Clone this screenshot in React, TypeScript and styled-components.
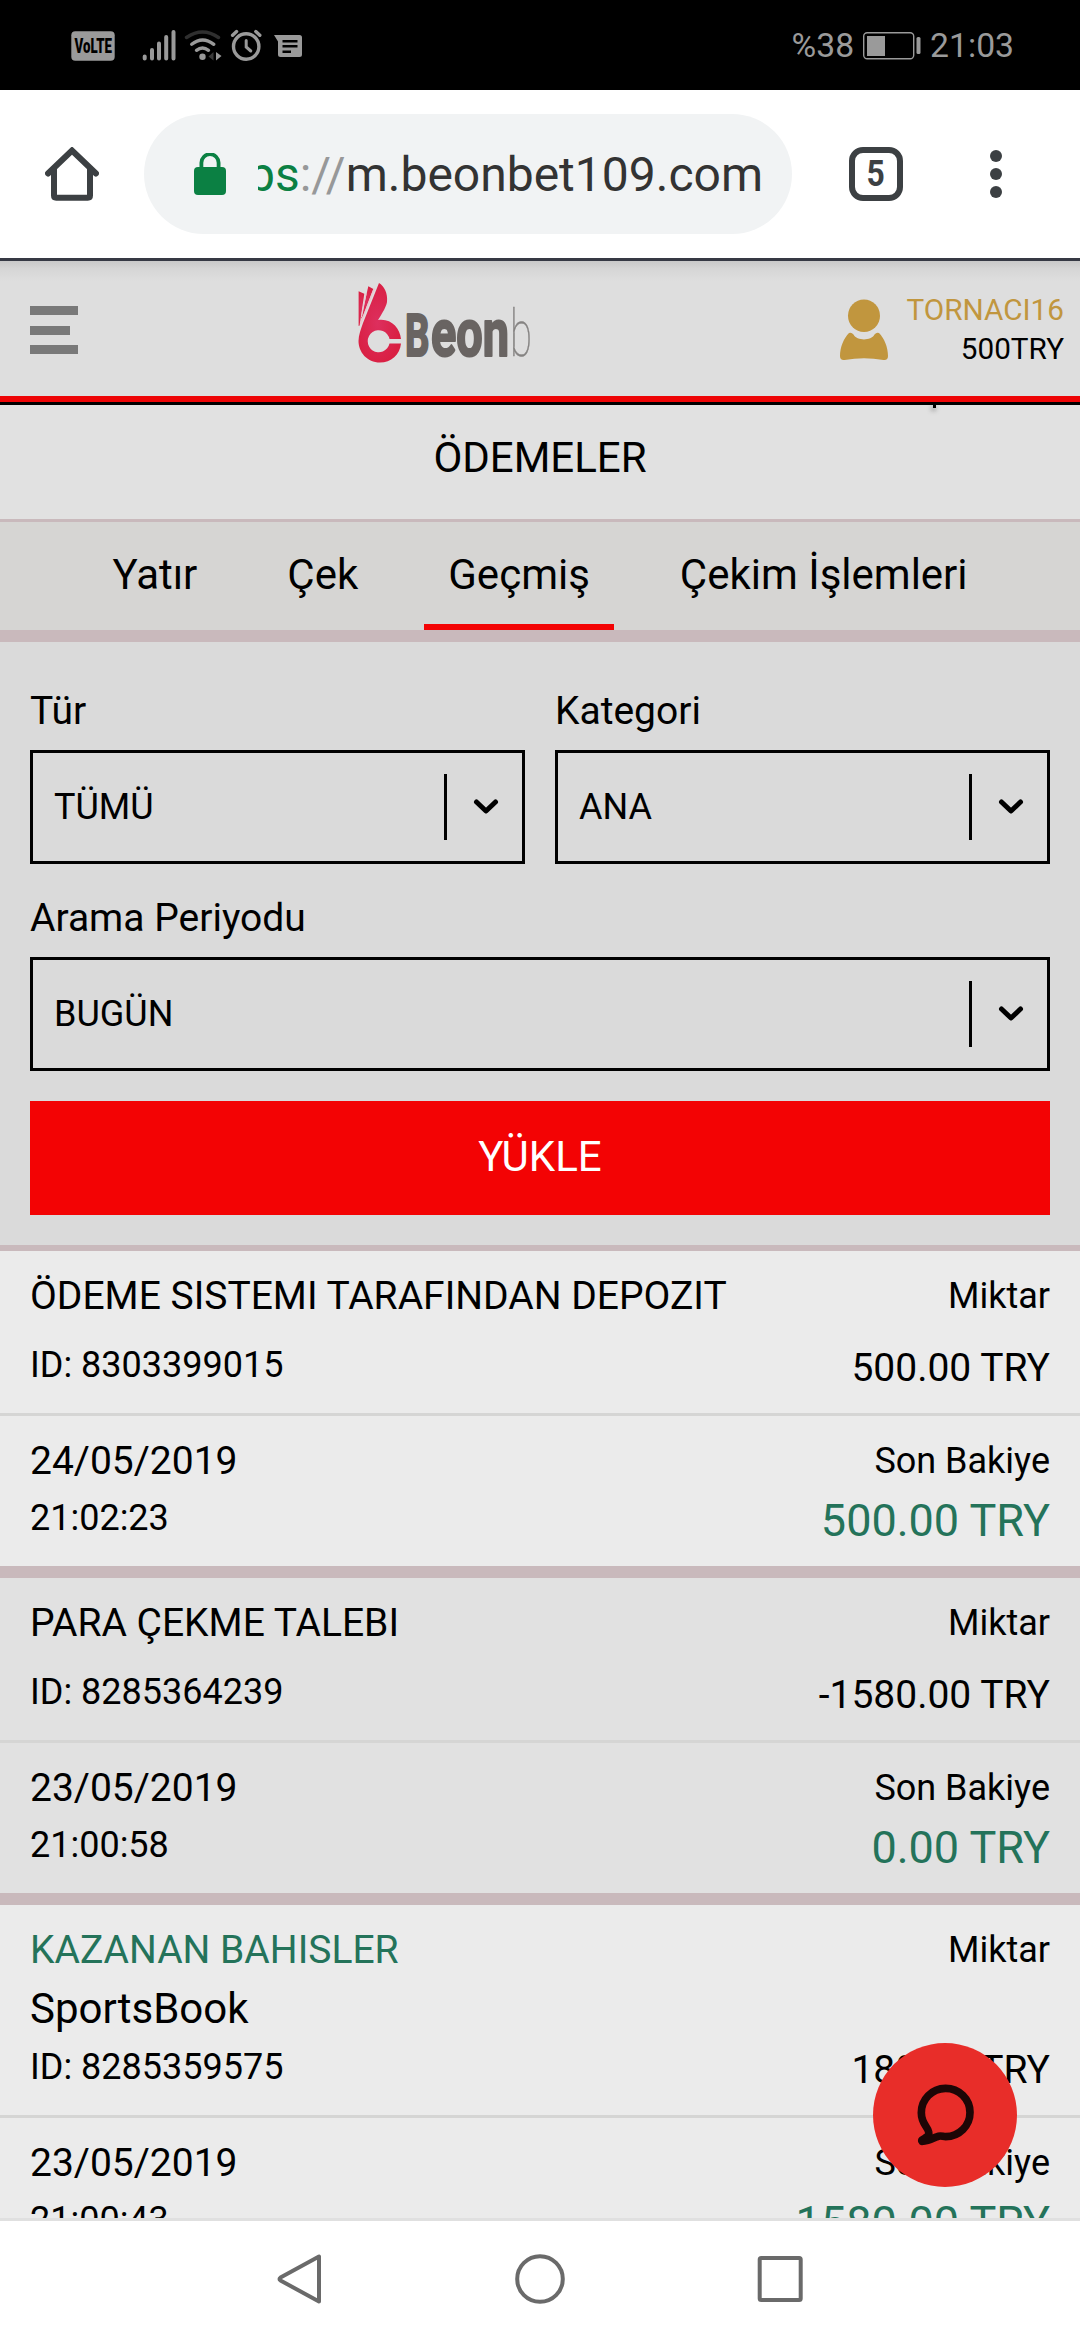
import React from "react";
import styled, { createGlobalStyle } from "styled-components";

const GlobalStyle = createGlobalStyle`
  *, *::before, *::after { box-sizing: border-box; }
  body {
    margin: 0;
    background: #fff;
    font-family: Roboto, "Noto Sans", sans-serif;
    color: #000;
  }
  svg { display: block; flex: none; }
`;

const palette = {
  pink: "#c9b9bc",
  red: "#f30304",
  green: "#24735a",
  gold: "#c1963e",
  chrome: "#3c4043",
  status: "#9a9a9a",
};

const Screen = styled.div`
  position: relative;
  width: 1080px;
  height: 2340px;
  display: flex;
  flex-direction: column;
  overflow: hidden;
`;

/* ---------- system status bar ---------- */

const StatusBar = styled.div`
  flex: none;
  height: 90px;
  padding: 2px 66px 0 71px;
  display: flex;
  align-items: center;
  justify-content: space-between;
  background: #000;
  color: ${palette.status};
`;

const StatusGroup = styled.div`
  display: flex;
  align-items: center;
`;

const StatusText = styled.span`
  font-size: 33.7px;
  line-height: 40px;
  white-space: nowrap;
`;

const Battery = styled.svg`
  margin: 0 9px;
`;

/* ---------- browser toolbar ---------- */

const Toolbar = styled.div`
  flex: none;
  height: 171px;
  padding: 24px 0 0 45px;
  display: flex;
  align-items: flex-start;
  background: #fff;
  border-bottom: 3px solid #363944;
`;

const ToolbarSlot = styled.div`
  flex: none;
  height: 120px;
  display: flex;
  align-items: center;
`;

const AddressPill = styled.div`
  flex: none;
  width: 648px;
  height: 120px;
  margin-left: 45px;
  padding-left: 50px;
  border-radius: 60px;
  background: #f1f3f4;
  display: flex;
  align-items: center;
`;

const UrlClip = styled.div`
  flex: none;
  width: 505px;
  margin: 2px 0 0 32px;
  display: flex;
  justify-content: flex-end;
  overflow: hidden;
  font-size: 48px;
  line-height: 64px;
  white-space: nowrap;
  color: #333;
`;

const UrlScheme = styled.span`
  color: #0b8043;
`;

const UrlSlashes = styled.span`
  color: #979899;
`;

const TabCounter = styled.div`
  width: 54px;
  height: 54px;
  margin-left: 57px;
  border: 6px solid ${palette.chrome};
  border-radius: 14px;
  display: flex;
  align-items: center;
  justify-content: center;
  font-size: 37px;
  font-weight: 700;
  line-height: 42px;
  color: ${palette.chrome};
`;

const TabCount = styled.span`
  transform: scaleX(0.86);
`;

const MenuDots = styled.svg`
  margin-left: 87px;
`;

/* ---------- site header ---------- */

const SiteHeader = styled.header`
  flex: none;
  height: 144px;
  padding: 0 16px 0 30px;
  display: flex;
  align-items: flex-start;
  background: linear-gradient(#c9c9c9 0, #d6d6d6 8px, #dedede 20px);
  border-bottom: 3px solid #000;
  box-shadow: inset 0 -6px 0 #ee0406;
`;

const Burger = styled.div`
  width: 48px;
  margin-top: 45px;
  display: flex;
  flex-direction: column;
  gap: 10.5px;
`;

const BurgerBar = styled.span<{ $short?: boolean }>`
  width: ${(p) => (p.$short ? 40 : 48)}px;
  height: 9px;
  background: #797979;
`;

const Logo = styled.svg`
  margin: 19px 0 0 277px;
  overflow: visible;
`;

const Account = styled.div`
  margin-left: auto;
  display: flex;
`;

const UserIcon = styled.svg`
  margin: 38px 19px 0 0;
`;

const AccountText = styled.div`
  padding-top: 29px;
  display: flex;
  flex-direction: column;
  align-items: flex-end;
  font-size: 29.7px;
  line-height: 39px;
`;

const UserName = styled.span`
  color: ${palette.gold};
`;

/* ---------- page body ---------- */

const Page = styled.main`
  position: relative;
  flex: none;
  height: 1813px;
  overflow: hidden;
  background: #dadada;
`;

const MenuCaret = styled.i`
  position: absolute;
  top: 0;
  left: 933px;
  width: 3px;
  height: 3px;
  background: #000;
  box-shadow: -1px 2px 5px rgba(0, 0, 0, 0.7);
`;

const PageTitle = styled.h1`
  margin: 0;
  height: 117px;
  font-size: 42px;
  font-weight: 400;
  line-height: 105px;
  text-align: center;
  background: #e1e1e1;
  border-bottom: 3px solid ${palette.pink};
`;

const TabBar = styled.nav`
  height: 120px;
  display: flex;
  justify-content: center;
  gap: 42px;
  background: #d6d5d3;
  border-bottom: 12px solid ${palette.pink};
`;

const Tab = styled.a<{ $active?: boolean }>`
  height: 108px;
  padding: 4px 24px 0;
  font-size: 42px;
  line-height: 98px;
  white-space: nowrap;
  border-bottom: 6px solid ${(p) => (p.$active ? palette.red : "transparent")};
`;

const Filters = styled.section`
  padding: 44px 30px 30px;
  border-bottom: 6px solid ${palette.pink};
`;

const FilterGrid = styled.div`
  display: grid;
  grid-template-columns: 1fr 1fr;
  column-gap: 30px;
  row-gap: 29px;
`;

const Field = styled.div<{ $wide?: boolean }>`
  grid-column: ${(p) => (p.$wide ? "1 / -1" : "auto")};
  display: flex;
  flex-direction: column;
  gap: 14px;
`;

const FieldLabel = styled.label`
  font-size: 39px;
  line-height: 50px;
`;

const SelectBox = styled.div`
  height: 114px;
  padding-left: 21px;
  border: 3px solid #000;
  display: flex;
  align-items: center;
  justify-content: space-between;
  font-size: 36px;
`;

const SelectArrow = styled.div`
  width: 78px;
  height: 66px;
  padding-left: 2px;
  border-left: 3px solid #000;
  display: flex;
  align-items: center;
  justify-content: center;
`;

const LoadButton = styled.button`
  display: block;
  width: 100%;
  height: 114px;
  margin-top: 30px;
  padding: 0 0 4px;
  border: 0;
  background: ${palette.red};
  color: #fff;
  font: 400 42px Roboto, sans-serif;
`;

const Record = styled.article<{ $shade: string }>`
  background: ${(p) => p.$shade};
  border-bottom: 12px solid ${palette.pink};
`;

const RecordTop = styled.div<{ $tall?: boolean }>`
  height: ${(p) => (p.$tall ? 213 : 165)}px;
  padding: 19px 30px 23px;
  border-bottom: 3px solid #d5d5d4;
  display: flex;
  justify-content: space-between;
`;

const RecordBottom = styled.div`
  height: 150px;
  padding: 19px 30px 0;
  display: flex;
  justify-content: space-between;
`;

const Stack = styled.div<{ $end?: boolean }>`
  display: flex;
  flex-direction: column;
  justify-content: space-between;
  align-items: ${(p) => (p.$end ? "flex-end" : "flex-start")};
`;

const DateStack = styled(Stack)`
  justify-content: flex-start;
`;

const Line = styled.span<{ $size: number; $height?: number; $green?: boolean }>`
  font-size: ${(p) => p.$size}px;
  line-height: ${(p) => p.$height ?? 52}px;
  color: ${(p) => (p.$green ? palette.green : "#000")};
  white-space: nowrap;
`;

const ChatButton = styled.button`
  position: absolute;
  left: 873px;
  top: 2043px;
  width: 144px;
  height: 144px;
  padding: 0 0 1px 1px;
  border: 0;
  border-radius: 50%;
  background: #e82d29;
  display: flex;
  align-items: center;
  justify-content: center;
`;

/* ---------- system navigation ---------- */

const NavBar = styled.footer`
  flex: none;
  height: 122px;
  padding: 33px 275px 0;
  display: flex;
  justify-content: space-between;
  background: #fff;
  border-top: 3px solid #e0e0e0;
`;

const StatusIcons = () => (
  <svg width="240" height="34" viewBox="71 29 240 34" fill={palette.status}>
    <rect x="71.3" y="31.3" width="43.4" height="29.4" rx="4" />
    <text
      x="74.5"
      y="53"
      fontFamily="Roboto, sans-serif"
      fontWeight="900"
      fontSize="20"
      textLength="37.5"
      lengthAdjust="spacingAndGlyphs"
      fill="#000"
    >
      VoLTE
    </text>
    <g stroke={palette.status} strokeWidth="4" strokeLinecap="round">
      <path d="M144.7 56.5v2M152 50v8.500M159 43.500v15M166.200 37v21.500M173.500 32v26.500" />
    </g>
    <circle cx="202.5" cy="56.8" r="3.2" />
    <g fill="none" strokeLinecap="round" strokeWidth="3.4">
      <path d="M186.5 37.5Q202.5 26.500 218.500 37.500" stroke="#2f2f2f" />
      <path d="M191.700 44.300Q202.500 35.500 213.800 44.300" stroke={palette.status} />
      <path d="M196.500 50.300Q202.500 45.500 208.500 50.300" stroke={palette.status} />
    </g>
    <path d="M213.500 52v8.500l-5-4z" fill="#3a3a3a" />
    <path d="M216 52v8.500l5.500-4.500z" />
    <g fill="none" stroke={palette.status} strokeWidth="3.4" strokeLinecap="round">
      <circle cx="246.200" cy="46.500" r="12.700" />
      <path d="M232.600 35.300l4-3.700M259.800 35.300l-4-3.700" />
      <path d="M246.200 40.500v6.500l4.600 4" strokeWidth="3" />
    </g>
    <path d="M274 35h25.500q2.500 0 2.500 2.500v17q0 2.500-2.500 2.500h-19q-2.500 0-2.500-2.500V41.500z" />
    <path d="M282.500 41.300h15M282.500 46.200h15M282.500 51.800h8.500" stroke="#000" strokeWidth="2.400" />
  </svg>
);

const HomeIcon = () => (
  <svg width="54" height="54" viewBox="45 147 54 54" fill="none" stroke={palette.chrome} strokeWidth="6" strokeLinecap="round">
    <path d="M48 173.500L72 150.500L96 173.500" />
    <path d="M54 169v26.500q0 2.200 2.200 2.200h31.600q2.200 0 2.200-2.200V169" />
  </svg>
);

const LockIcon = () => (
  <svg width="32" height="42" viewBox="194 152 32 42">
    <path d="M201.400 168v-6.200a8.600 8.600 0 0 1 17.200 0V168" fill="none" stroke="#0b8043" strokeWidth="3.800" />
    <rect x="194" y="166" width="32" height="28" rx="4" fill="#0b8043" />
  </svg>
);

const BrandLogo = () => (
  <Logo width="180" height="86" viewBox="355 280 180 86">
    <defs>
      <radialGradient id="hand" cx="0.45" cy="0.5" r="0.55">
        <stop offset="0" stopColor="#dd2f5e" />
        <stop offset="1" stopColor="#d91f42" />
      </radialGradient>
    </defs>
    <g fill="url(#hand)">
      <path d="M379 283C384 286 388 293 387 302C386 307 383 312 378 320C391 318 400 328 401 339H389.500A11 11 0 1 0 389.500 343.500H401C400 355 391 362.500 380 362.500C367 362.500 358.500 352 358.500 341C358.500 335 361 329 363 323z" />
      <path d="M358.600 291.300L364.300 293.700L359.600 325.500L358.600 326z" />
      <path d="M368.300 286.300L373.300 289L363.200 315.500L361 319z" />
    </g>
    <path d="M360.500 324L374.300 288.500" stroke="#eac6cf" strokeWidth="1.500" />
    <path d="M361.500 317L366 293.500" stroke="#eac6cf" strokeWidth="1.200" />
    <g fill="#696462" stroke="#696462" strokeWidth="2.200" strokeLinejoin="round" fontFamily="Roboto, sans-serif" fontWeight="700">
      <text x="405" y="355.500" fontSize="60" textLength="24.500" lengthAdjust="spacingAndGlyphs">
        B
      </text>
      <text x="431" y="355.500" fontSize="67" textLength="78" lengthAdjust="spacingAndGlyphs">
        eon
      </text>
    </g>
    <text
      x="510"
      y="356"
      fontFamily="Roboto, sans-serif"
      fontWeight="100"
      fontSize="65"
      fill="#858382"
      stroke="#858382"
      strokeWidth="0.500"
      textLength="22"
      lengthAdjust="spacingAndGlyphs"
    >
      b
    </text>
  </Logo>
);

const Chevron = () => (
  <svg width="26" height="18" viewBox="0 0 26 18" fill="none" stroke="#000" strokeWidth="5" strokeLinecap="round" strokeLinejoin="round">
    <path d="M3.500 4l9.500 9l9.500-9" />
  </svg>
);

const ChatIcon = () => (
  <svg width="58" height="62" viewBox="169 162 174 186" fill="none" stroke="#1d0606" strokeWidth="23" strokeLinejoin="round">
    <path d="M204 306C202 291 182 282 182 248.500A73 72.500 0 1 1 255 320C246 320 240 315 229 320C214 327 200 334 184 334C180 331 189 327 197 322Q206 316 204 306z" />
  </svg>
);

const Select = ({ label, value, wide }: { label: string; value: string; wide?: boolean }) => (
  <Field $wide={wide}>
    <FieldLabel>{label}</FieldLabel>
    <SelectBox>
      {value}
      <SelectArrow>
        <Chevron />
      </SelectArrow>
    </SelectBox>
  </Field>
);

type Entry = {
  title: string;
  won?: boolean;
  source?: string;
  id: string;
  amount: string;
  date: string;
  time: string;
  balance: string;
};

const entries: Entry[] = [
  {
    title: "ÖDEME SISTEMI TARAFINDAN DEPOZIT",
    id: "8303399015",
    amount: "500.00 TRY",
    date: "24/05/2019",
    time: "21:02:23",
    balance: "500.00 TRY",
  },
  {
    title: "PARA ÇEKME TALEBI",
    id: "8285364239",
    amount: "-1580.00 TRY",
    date: "23/05/2019",
    time: "21:00:58",
    balance: "0.00 TRY",
  },
  {
    title: "KAZANAN BAHISLER",
    won: true,
    source: "SportsBook",
    id: "8285359575",
    amount: "180.00 TRY",
    date: "23/05/2019",
    time: "21:00:43",
    balance: "1580.00 TRY",
  },
];

const tabs = ["Yatır", "Çek", "Geçmiş", "Çekim İşlemleri"];

export default function App() {
  return (
    <Screen>
      <GlobalStyle />
      <StatusBar>
        <StatusIcons />
        <StatusGroup>
          <StatusText>%38</StatusText>
          <Battery width="58" height="28" viewBox="862 32 58 28" fill={palette.status}>
            <rect x="862.700" y="32.700" width="50" height="26" rx="3.500" fill="none" stroke={palette.status} strokeWidth="1.400" />
            <rect x="866" y="36" width="18" height="20" />
            <rect x="915.500" y="37" width="4" height="17" rx="1.500" />
          </Battery>
          <StatusText>21:03</StatusText>
        </StatusGroup>
      </StatusBar>

      <Toolbar>
        <ToolbarSlot>
          <HomeIcon />
        </ToolbarSlot>
        <AddressPill>
          <LockIcon />
          <UrlClip>
            <UrlScheme>https</UrlScheme>
            <UrlSlashes>://</UrlSlashes>
            <span>m.beonbet109.com</span>
          </UrlClip>
        </AddressPill>
        <ToolbarSlot>
          <TabCounter>
            <TabCount>5</TabCount>
          </TabCounter>
          <MenuDots width="12" height="48" viewBox="0 0 12 48" fill={palette.chrome}>
            <circle cx="6" cy="6" r="6" />
            <circle cx="6" cy="24" r="6" />
            <circle cx="6" cy="42" r="6" />
          </MenuDots>
        </ToolbarSlot>
      </Toolbar>

      <SiteHeader>
        <Burger>
          <BurgerBar />
          <BurgerBar $short />
          <BurgerBar />
        </Burger>
        <BrandLogo />
        <Account>
          <UserIcon width="48" height="62" viewBox="840 299 48 62" fill={palette.gold}>
            <ellipse cx="864" cy="315.800" rx="16" ry="16.200" />
            <path d="M849 333Q851.500 332 853.500 334.500C857 341 871 341 874.500 334.500Q876.500 332 879 333C884 338 888 347 888 356Q888 360.500 883.500 360Q864 356.500 844.500 360Q840 360.500 840 356C840 347 844 338 849 333z" />
          </UserIcon>
          <AccountText>
            <UserName>TORNACI16</UserName>
            <span>500TRY</span>
          </AccountText>
        </Account>
      </SiteHeader>

      <Page>
        <MenuCaret />
        <PageTitle>ÖDEMELER</PageTitle>
        <TabBar>
          {tabs.map((name) => (
            <Tab key={name} $active={name === "Geçmiş"}>
              {name}
            </Tab>
          ))}
        </TabBar>
        <Filters>
          <FilterGrid>
            <Select label="Tür" value="TÜMÜ" />
            <Select label="Kategori" value="ANA" />
            <Select label="Arama Periyodu" value="BUGÜN" wide />
          </FilterGrid>
          <LoadButton>YÜKLE</LoadButton>
        </Filters>
        {entries.map((entry, i) => (
          <Record key={entry.id} $shade={i % 2 ? "#e1e1e1" : "#ebebeb"}>
            <RecordTop $tall={Boolean(entry.source)}>
              <Stack>
                <Line $size={39} $green={entry.won}>
                  {entry.title}
                </Line>
                {entry.source && (
                  <Line $size={42} $height={50}>
                    {entry.source}
                  </Line>
                )}
                <Line $size={36} $height={50}>
                  ID: {entry.id}
                </Line>
              </Stack>
              <Stack $end>
                <Line $size={36}>Miktar</Line>
                <Line $size={39} $height={44}>
                  {entry.amount}
                </Line>
              </Stack>
            </RecordTop>
            <RecordBottom>
              <DateStack>
                <Line $size={39}>{entry.date}</Line>
                <Line $size={36} $height={62}>
                  {entry.time}
                </Line>
              </DateStack>
              <DateStack $end>
                <Line $size={36}>Son Bakiye</Line>
                <Line $size={45} $height={68} $green>
                  {entry.balance}
                </Line>
              </DateStack>
            </RecordBottom>
          </Record>
        ))}
      </Page>

      <NavBar>
        <svg width="50" height="50" viewBox="0 0 50 50" fill="none" stroke="#6a6a6a" strokeWidth="4" strokeLinejoin="round">
          <path d="M44 2.500v45L5.500 26.500q-2-1.500 0-3z" />
        </svg>
        <svg width="50" height="50" viewBox="0 0 50 50" fill="none" stroke="#6a6a6a" strokeWidth="4">
          <circle cx="25" cy="25" r="22.800" />
        </svg>
        <svg width="50" height="50" viewBox="0 0 50 50" fill="none" stroke="#6a6a6a" strokeWidth="4">
          <rect x="4.700" y="4" width="41" height="42" rx="1.500" />
        </svg>
      </NavBar>

      <ChatButton aria-label="chat">
        <ChatIcon />
      </ChatButton>
    </Screen>
  );
}
